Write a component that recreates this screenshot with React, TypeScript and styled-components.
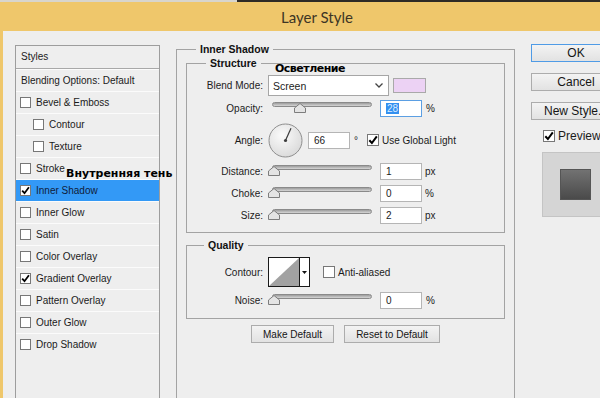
import React, { FC } from 'react';
import styled, { createGlobalStyle } from 'styled-components';

const GlobalStyle = createGlobalStyle`
  html, body {
    margin: 0;
    padding: 0;
    background: #eeeeee;
  }
  body {
    font-family: 'Liberation Sans', Arial, sans-serif;
    font-size: 10px;
    color: #1b1b1b;
  }
  * {
    box-sizing: border-box;
  }
`;

const Window = styled.div`
  position: relative;
  width: 600px;
  height: 398px;
  overflow: hidden;
  display: flex;
  flex-direction: column;
  background: #eeeeee;
`;

const TopEdge = styled.div`
  display: flex;
  flex: none;
  height: 2px;
`;

const EdgePart = styled.div<{ $dark?: boolean; $width?: number }>`
  height: 100%;
  flex: ${(p) => (p.$width ? 'none' : 1)};
  width: ${(p) => (p.$width ? `${p.$width}px` : 'auto')};
  background: ${(p) => (p.$dark ? '#2e2b26' : '#d8d5cd')};
`;

const TitleBar = styled.div`
  flex: none;
  height: 29px;
  display: flex;
  align-items: center;
  justify-content: center;
  padding-left: 34px;
  background: #efc76b;
  font-family: Lato, 'Open Sans', sans-serif;
  font-size: 15px;
  color: #3d3525;
`;

const Body = styled.div`
  flex: 1;
  min-height: 0;
  display: flex;
  align-items: flex-start;
  border-left: 3px solid #efc76b;
  padding: 13px 0 0 12px;
`;

/* ---------- styles list ---------- */

const StylesList = styled.div`
  flex: none;
  width: 145px;
  height: 400px;
  margin-top: 1px;
  border: 1px solid #9d9d9d;
`;

const ListHeader = styled.div`
  height: 23px;
  line-height: 22px;
  padding-left: 5px;
  border-bottom: 1px solid #a8a8a8;
`;

const ListRow = styled.div<{ $indent: number; $selected?: boolean }>`
  height: 22px;
  display: flex;
  align-items: center;
  gap: 5px;
  padding-left: ${(p) => p.$indent}px;
  border-top: 1px solid #fbfbfb;
  background: ${(p) => (p.$selected ? '#3399f6' : 'transparent')};
  color: ${(p) => (p.$selected ? '#10203a' : '#1b1b1b')};
`;

const Box = styled.span<{ $size: number }>`
  flex: none;
  width: ${(p) => p.$size}px;
  height: ${(p) => p.$size}px;
  border: 1px solid #777777;
  background: #ffffff;
  display: flex;
  align-items: center;
  justify-content: center;
`;

const Check: FC<{ checked?: boolean; size?: number }> = ({ checked, size = 11 }) => (
  <Box $size={size}>
    {checked ? (
      <svg width={size - 2} height={size - 2} viewBox="0 0 10 10">
        <path d="M1.3 5.2 L3.9 8 L8.8 1.4" fill="none" stroke="#000" strokeWidth="2" />
      </svg>
    ) : null}
  </Box>
);

/* ---------- main frame ---------- */

const Frame = styled.div`
  flex: none;
  width: 339px;
  height: 380px;
  margin: 5px 0 0 16px;
  padding: 0 9px;
  border: 1px solid #a3a3a3;
  display: flex;
  flex-direction: column;
`;

const Caption = styled.span<{ $indent: number }>`
  align-self: flex-start;
  margin: -7px 0 0 ${(p) => p.$indent}px;
  padding: 0 4px;
  background: #eeeeee;
  font-weight: bold;
  font-size: 10.5px;
  line-height: 13px;
  color: #111111;
`;

const Group = styled.div<{ $top: number; $bottom: number }>`
  display: flex;
  flex-direction: column;
  margin-top: ${(p) => p.$top}px;
  padding-bottom: ${(p) => p.$bottom}px;
  border: 1px solid #a3a3a3;
`;

const Row = styled.div<{ $top: number; $height: number }>`
  display: flex;
  align-items: center;
  height: ${(p) => p.$height}px;
  margin-top: ${(p) => p.$top}px;
`;

const Label = styled.span`
  flex: none;
  width: 76px;
  margin-right: 5px;
  text-align: right;
  white-space: nowrap;
`;

const Select = styled.div`
  width: 121px;
  height: 21px;
  display: flex;
  align-items: center;
  justify-content: space-between;
  padding: 0 5px 0 4px;
  border: 1px solid #a6a6a6;
  background: #ffffff;
  font-size: 10.5px;
`;

const Swatch = styled.div<{ $color: string }>`
  width: 33px;
  height: 15px;
  margin-left: 4px;
  border: 1px solid #a9a9a9;
  background: ${(p) => p.$color};
`;

const SliderBox = styled.div`
  position: relative;
  flex: none;
  width: 105px;
  height: 17px;
`;

const Track = styled.div`
  width: 100px;
  height: 5px;
  margin: 2px 0 0 4px;
  border: 1px solid #8a8a8a;
  border-radius: 3px;
  background: linear-gradient(#9c9c9c, #d6d6d6);
`;

const Thumb = styled.svg`
  position: absolute;
  top: 3px;
`;

const Slider: FC<{ value: number }> = ({ value }) => (
  <SliderBox>
    <Track />
    <Thumb width="12" height="10" viewBox="0 0 12 10" style={{ left: (value * 93) / 100 }}>
      <path d="M0.5 9.5 V5 L6 0.5 L11.5 5 V9.5 Z" fill="#e4e4e4" stroke="#7d7d7d" />
    </Thumb>
  </SliderBox>
);

const Field = styled.div<{ $focused?: boolean; $gap?: number }>`
  flex: none;
  width: 42px;
  height: 17px;
  margin-left: ${(p) => p.$gap ?? 7}px;
  padding-left: 5px;
  display: flex;
  align-items: center;
  border: 1px solid ${(p) => (p.$focused ? '#5b9fe3' : '#b5b5b5')};
  background: #ffffff;
`;

const Selection = styled.span`
  background: #3390f0;
  color: #dcebff;
  padding: 0 1px;
`;

const Unit = styled.span<{ $gap?: number }>`
  margin-left: ${(p) => p.$gap ?? 4}px;
`;

const Dial: FC<{ angle: number }> = ({ angle }) => {
  const r = (angle * Math.PI) / 180;
  const x = 17.5 + 13.5 * Math.cos(r);
  const y = 17.5 - 13.5 * Math.sin(r);
  return (
    <svg width="35" height="35" viewBox="0 0 35 35">
      <defs>
        <radialGradient id="dialFill" cx="0.4" cy="0.35" r="0.7">
          <stop offset="0" stopColor="#fbfbfb" />
          <stop offset="1" stopColor="#d9d9d9" />
        </radialGradient>
      </defs>
      <circle cx="17.5" cy="17.5" r="16.5" fill="url(#dialFill)" stroke="#8e8e8e" />
      <line x1="17.5" y1="17.5" x2={x} y2={y} stroke="#3c3c3c" strokeWidth="1.2" />
      <circle cx="17.5" cy="17.5" r="1.6" fill="#3c3c3c" />
    </svg>
  );
};

const ContourPicker = styled.div`
  flex: none;
  display: flex;
  width: 42px;
  height: 30px;
  border: 1px solid #1a1a1a;
  background: #ffffff;
`;

const ContourArrow = styled.div`
  flex: 1;
  display: flex;
  align-items: center;
  justify-content: center;
  border-left: 1px solid #1a1a1a;
`;

const CheckLabel = styled.label<{ $gap: number }>`
  display: flex;
  align-items: center;
  gap: 3px;
  margin-left: ${(p) => p.$gap}px;
  white-space: nowrap;
`;

const ButtonRow = styled.div`
  display: flex;
  justify-content: center;
  gap: 10px;
  margin-top: 6px;
`;

const Button = styled.button<{ $width: number; $big?: boolean; $default?: boolean }>`
  flex: none;
  width: ${(p) => p.$width}px;
  height: 18px;
  padding: 0;
  border: 1px solid ${(p) => (p.$default ? '#4f9be6' : '#acacac')};
  background: linear-gradient(#f3f3f3, #e2e2e2);
  font-family: 'Liberation Sans', Arial, sans-serif;
  font-size: ${(p) => (p.$big ? 12 : 10)}px;
  color: #151515;
  white-space: nowrap;
`;

/* ---------- side column ---------- */

const Side = styled.div`
  flex: none;
  width: 100px;
  margin-left: 16px;
  display: flex;
  flex-direction: column;
  gap: 11px;
`;

const PreviewLabel = styled.label`
  display: flex;
  align-items: center;
  gap: 3px;
  height: 13px;
  margin-top: -2px;
  padding-left: 12px;
  font-size: 12px;
  white-space: nowrap;
`;

const PreviewBox = styled.div`
  width: 66px;
  height: 65px;
  margin: -1px 0 0 11px;
  display: flex;
  align-items: center;
  justify-content: center;
  border: 1px solid #c4c4c4;
  background: #d5d5d5;
`;

const PreviewSwatch = styled.div`
  width: 31px;
  height: 31px;
  border: 1px solid #555555;
  background: linear-gradient(#727272, #4a4a4a);
`;

/* ---------- annotations ---------- */

const Note = styled.span<{ $x: number; $y: number; $spacing: number }>`
  position: absolute;
  left: ${(p) => p.$x}px;
  top: ${(p) => p.$y}px;
  font-family: 'DejaVu Sans', Verdana, sans-serif;
  font-weight: bold;
  font-size: 11px;
  letter-spacing: ${(p) => p.$spacing}px;
  line-height: 13px;
  color: #000000;
  white-space: nowrap;
`;

const styleItems: { name: string; indent: number; checked?: boolean; selected?: boolean }[] = [
  { name: 'Bevel & Emboss', indent: 4 },
  { name: 'Contour', indent: 17 },
  { name: 'Texture', indent: 17 },
  { name: 'Stroke', indent: 4 },
  { name: 'Inner Shadow', indent: 4, checked: true, selected: true },
  { name: 'Inner Glow', indent: 4 },
  { name: 'Satin', indent: 4 },
  { name: 'Color Overlay', indent: 4 },
  { name: 'Gradient Overlay', indent: 4, checked: true },
  { name: 'Pattern Overlay', indent: 4 },
  { name: 'Outer Glow', indent: 4 },
  { name: 'Drop Shadow', indent: 4 },
];

const sliderRows: { label: string; value: number; text: string; unit: string; top: number }[] = [
  { label: 'Distance:', value: 0, text: '1', unit: 'px', top: 6 },
  { label: 'Choke:', value: 0, text: '0', unit: '%', top: 5 },
  { label: 'Size:', value: 0, text: '2', unit: 'px', top: 5 },
];

export default function App() {
  return (
    <Window>
      <GlobalStyle />
      <TopEdge>
        <EdgePart $width={237} />
        <EdgePart $dark />
      </TopEdge>
      <TitleBar>Layer Style</TitleBar>
      <Body>
        <StylesList>
          <ListHeader>Styles</ListHeader>
          <ListRow $indent={5}>Blending Options: Default</ListRow>
          {styleItems.map((item) => (
            <ListRow key={item.name} $indent={item.indent} $selected={item.selected}>
              <Check checked={item.checked} />
              {item.name}
            </ListRow>
          ))}
        </StylesList>

        <Frame>
          <Caption $indent={10}>Inner Shadow</Caption>
          <Group $top={7} $bottom={8}>
            <Caption $indent={19}>Structure</Caption>
            <Row $top={5} $height={21}>
              <Label>Blend Mode:</Label>
              <Select>
                Screen
                <svg width="8" height="5" viewBox="0 0 8 5">
                  <path d="M0.5 0.5 L4 4 L7.5 0.5" fill="none" stroke="#444" strokeWidth="1.3" />
                </svg>
              </Select>
              <Swatch $color="#ecd2f4" />
            </Row>
            <Row $top={4} $height={17}>
              <Label>Opacity:</Label>
              <Slider value={28} />
              <Field $focused>
                <Selection>28</Selection>
              </Field>
              <Unit>%</Unit>
            </Row>
            <Row $top={6} $height={34}>
              <Label>Angle:</Label>
              <Dial angle={66} />
              <Field $gap={5}>66</Field>
              <Unit>°</Unit>
              <CheckLabel $gap={9}>
                <Check checked size={12} />
                Use Global Light
              </CheckLabel>
            </Row>
            {sliderRows.map((row) => (
              <Row key={row.label} $top={row.top} $height={17}>
                <Label>{row.label}</Label>
                <Slider value={row.value} />
                <Field>{row.text}</Field>
                <Unit $gap={3}>{row.unit}</Unit>
              </Row>
            ))}
          </Group>

          <Group $top={12} $bottom={9}>
            <Caption $indent={17}>Quality</Caption>
            <Row $top={5} $height={30}>
              <Label>Contour:</Label>
              <ContourPicker>
                <svg width="30" height="28" viewBox="0 0 30 28">
                  <polygon points="0,28 30,0 30,28" fill="#a2a2a2" />
                </svg>
                <ContourArrow>
                  <svg width="5" height="3" viewBox="0 0 5 3">
                    <polygon points="0,0 5,0 2.5,3" fill="#111" />
                  </svg>
                </ContourArrow>
              </ContourPicker>
              <CheckLabel $gap={13}>
                <Check size={12} />
                Anti-aliased
              </CheckLabel>
            </Row>
            <Row $top={5} $height={17}>
              <Label>Noise:</Label>
              <Slider value={0} />
              <Field>0</Field>
              <Unit>%</Unit>
            </Row>
          </Group>

          <ButtonRow>
            <Button $width={83}>Make Default</Button>
            <Button $width={96}>Reset to Default</Button>
          </ButtonRow>
        </Frame>

        <Side>
          <Button $width={90} $big $default>
            OK
          </Button>
          <Button $width={90} $big>
            Cancel
          </Button>
          <Button $width={90} $big>
            New Style...
          </Button>
          <PreviewLabel>
            <Check checked size={12} />
            Preview
          </PreviewLabel>
          <PreviewBox>
            <PreviewSwatch />
          </PreviewBox>
        </Side>
      </Body>

      <Note $x={275} $y={62} $spacing={-0.5}>
        Осветление
      </Note>
      <Note $x={66} $y={167} $spacing={0}>
        Внутренняя тень
      </Note>
    </Window>
  );
}
